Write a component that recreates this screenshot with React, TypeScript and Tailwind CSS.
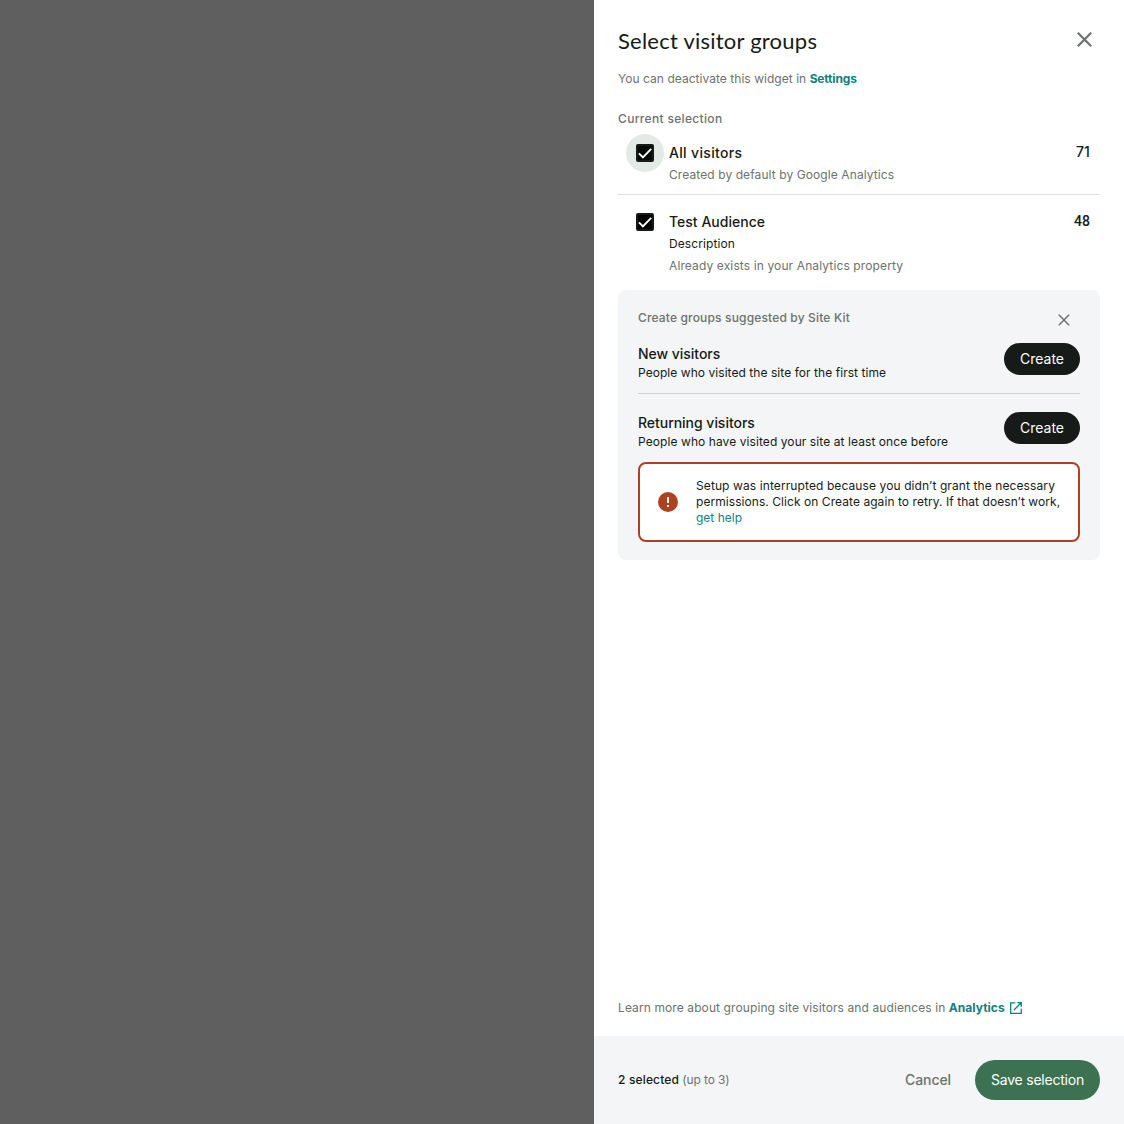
import type { ReactNode } from "react";

function CloseIcon({ size, width }: { size: number; width: number }) {
  return (
    <svg width={size} height={size} viewBox={`0 0 ${size} ${size}`} fill="none" stroke="#6c726e" strokeWidth={width} className="block">
      <path d={`M.8 .8L${size - 0.8} ${size - 0.8}M${size - 0.8} .8L.8 ${size - 0.8}`} />
    </svg>
  );
}

function Checkbox({ focused = false }: { focused?: boolean }) {
  return (
    <div className={`flex size-[38px] items-center justify-center rounded-full ${focused ? "bg-[#e3eae6]" : ""}`}>
      <div className={`flex size-[18px] items-center justify-center rounded-[2px] border-2 border-[#161b18] ${focused ? "bg-[#020b06]" : "bg-black"}`}>
        <svg width="18" height="18" viewBox="0 0 18 18" fill="none" stroke="#fff" strokeWidth="1.9" className="shrink-0">
          <path d="M2.9 9.4L6.9 13.3L15.2 4.9" />
        </svg>
      </div>
    </div>
  );
}

function AudienceRow({ title, tracking, count, countClass, focused, children }: { title: string; tracking: string; count: string; countClass: string; focused?: boolean; children: ReactNode }) {
  return (
    <div className="flex pl-2">
      <Checkbox focused={focused} />
      <div className="ml-[5px] flex-1 pt-[9px]">
        <h3 className={`text-sm font-medium leading-5 ${tracking}`}>{title}</h3>
        {children}
      </div>
      <span className={`pt-2 text-sm font-medium leading-5 ${countClass}`}>{count}</span>
    </div>
  );
}

function SuggestedGroup({ title, description, tracking }: { title: string; description: string; tracking: string }) {
  return (
    <div className="flex h-[38px] justify-between">
      <div className="pt-px">
        <h3 className="text-sm font-medium leading-5 tracking-[-0.03px]">{title}</h3>
        <p className={`mt-px leading-4 ${tracking}`}>{description}</p>
      </div>
      <button className="h-8 w-[76px] rounded-full bg-[#161b18] text-sm text-white">Create</button>
    </div>
  );
}

export default function App() {
  return (
    <div className="flex h-[1124px] w-[1124px] overflow-hidden bg-[#5f5f5f] font-['Inter',sans-serif] text-xs text-[#161b18]">
      <aside className="ml-[594px] flex w-[530px] flex-col bg-white">
        <header className="flex justify-between pl-6 pr-8 pt-[25px]">
          <h1 className="font-['Lato',sans-serif] text-[22px] leading-8 tracking-[0.23px]">Select visitor groups</h1>
          <button aria-label="Close" className="mt-[7px] h-[15px]">
            <CloseIcon size={15} width={2.2} />
          </button>
        </header>
        <main className="flex flex-1 flex-col px-6">
          <p className="mt-3.5 whitespace-nowrap leading-4 text-[#6c726e]">
            <span className="tracking-[0.04px]">You can deactivate this widget in </span>
            <a className="font-bold tracking-[-0.17px] text-[#108080]">Settings</a>
          </p>
          <h2 className="mt-6 font-medium leading-4 tracking-[0.33px] text-[#6c726e]">Current selection</h2>
          <div className="mr-px mt-[7px] h-[61px] border-b border-[#dbe0de]">
            <AudienceRow title="All visitors" tracking="tracking-[0.33px]" count="71" countClass="pr-[9px] tracking-[0.1px]" focused>
              <p className="mt-1 leading-4 tracking-[0.09px] text-[#6c726e]">Created by default by Google Analytics</p>
            </AudienceRow>
          </div>
          <div className="mr-px mt-2 h-[87px]">
            <AudienceRow title="Test Audience" tracking="tracking-[0.02px]" count="48" countClass="pr-[9px] font-['Roboto',sans-serif]">
              <p className="mt-1 leading-4 tracking-[0.1px]">Description</p>
              <p className="mt-1.5 leading-4 tracking-[0.12px] text-[#6c726e]">Already exists in your Analytics property</p>
            </AudienceRow>
          </div>
          <section className="h-[270px] rounded-lg bg-[#f3f5f7] px-5 pt-5">
            <div className="flex h-[33px] justify-between pr-2.5">
              <h2 className="font-medium leading-4 tracking-[0.16px] text-[#6c726e]">Create groups suggested by Site Kit</h2>
              <button aria-label="Dismiss" className="mt-1 h-3">
                <CloseIcon size={12} width={1.5} />
              </button>
            </div>
            <div className="h-[51px] border-b border-[#cbd0d3]">
              <SuggestedGroup title="New visitors" description="People who visited the site for the first time" tracking="tracking-[0.055px]" />
            </div>
            <div className="mt-[18px]">
              <SuggestedGroup title="Returning visitors" description="People who have visited your site at least once before" tracking="tracking-[0.08px]" />
            </div>
            <div className="mt-3 flex h-20 items-center rounded-lg border-2 border-[#ac4220] bg-white pl-[18px]">
              <svg width="20" height="20" viewBox="0 0 20 20" className="shrink-0">
                <circle cx="10" cy="10" r="10" fill="#ac4220" />
                <path d="M9 5h2v6H9zM9 13h2v2H9z" fill="#fff" />
              </svg>
              <p className="ml-[18px] whitespace-nowrap leading-4">
                <span className="tracking-[0.1px]">Setup was interrupted because you didn’t grant the necessary</span>
                <br />
                <span className="tracking-[0.06px]">permissions. Click on Create again to retry. If that doesn’t work,</span>
                <br />
                <a className="text-[#108080]">get help</a>
              </p>
            </div>
          </section>
          <p className="mb-5 mt-auto flex items-center whitespace-pre leading-4 text-[#6c726e]">
            <span className="tracking-[0.1px]">Learn more about grouping site visitors and audiences in </span>
            <a className="flex items-center font-bold tracking-[0.02px] text-[#108080]">
              Analytics
              <svg width="12" height="12" viewBox="0 0 12 12" fill="none" stroke="#108080" strokeWidth="1.3" className="ml-[5px]">
                <path d="M5.3 .9H.7V11.3H11.3V6.7M7.3 .7H11.3V4.7M11.2 .8L4 8" />
              </svg>
            </a>
          </p>
        </main>
        <footer className="flex h-[88px] items-center bg-[#f3f5f7] px-6">
          <p className="mr-auto whitespace-pre leading-4">
            <span className="font-medium tracking-[0.15px]">2 selected</span>
            <span className="tracking-[-0.13px] text-[#6c726e]"> (up to 3)</span>
          </p>
          <button className="mr-6 text-sm font-medium tracking-[-0.08px] text-[#6c726e]">Cancel</button>
          <button className="h-10 w-[125px] rounded-full bg-[#3c7251] text-sm tracking-[-0.22px] text-white">Save selection</button>
        </footer>
      </aside>
    </div>
  );
}
